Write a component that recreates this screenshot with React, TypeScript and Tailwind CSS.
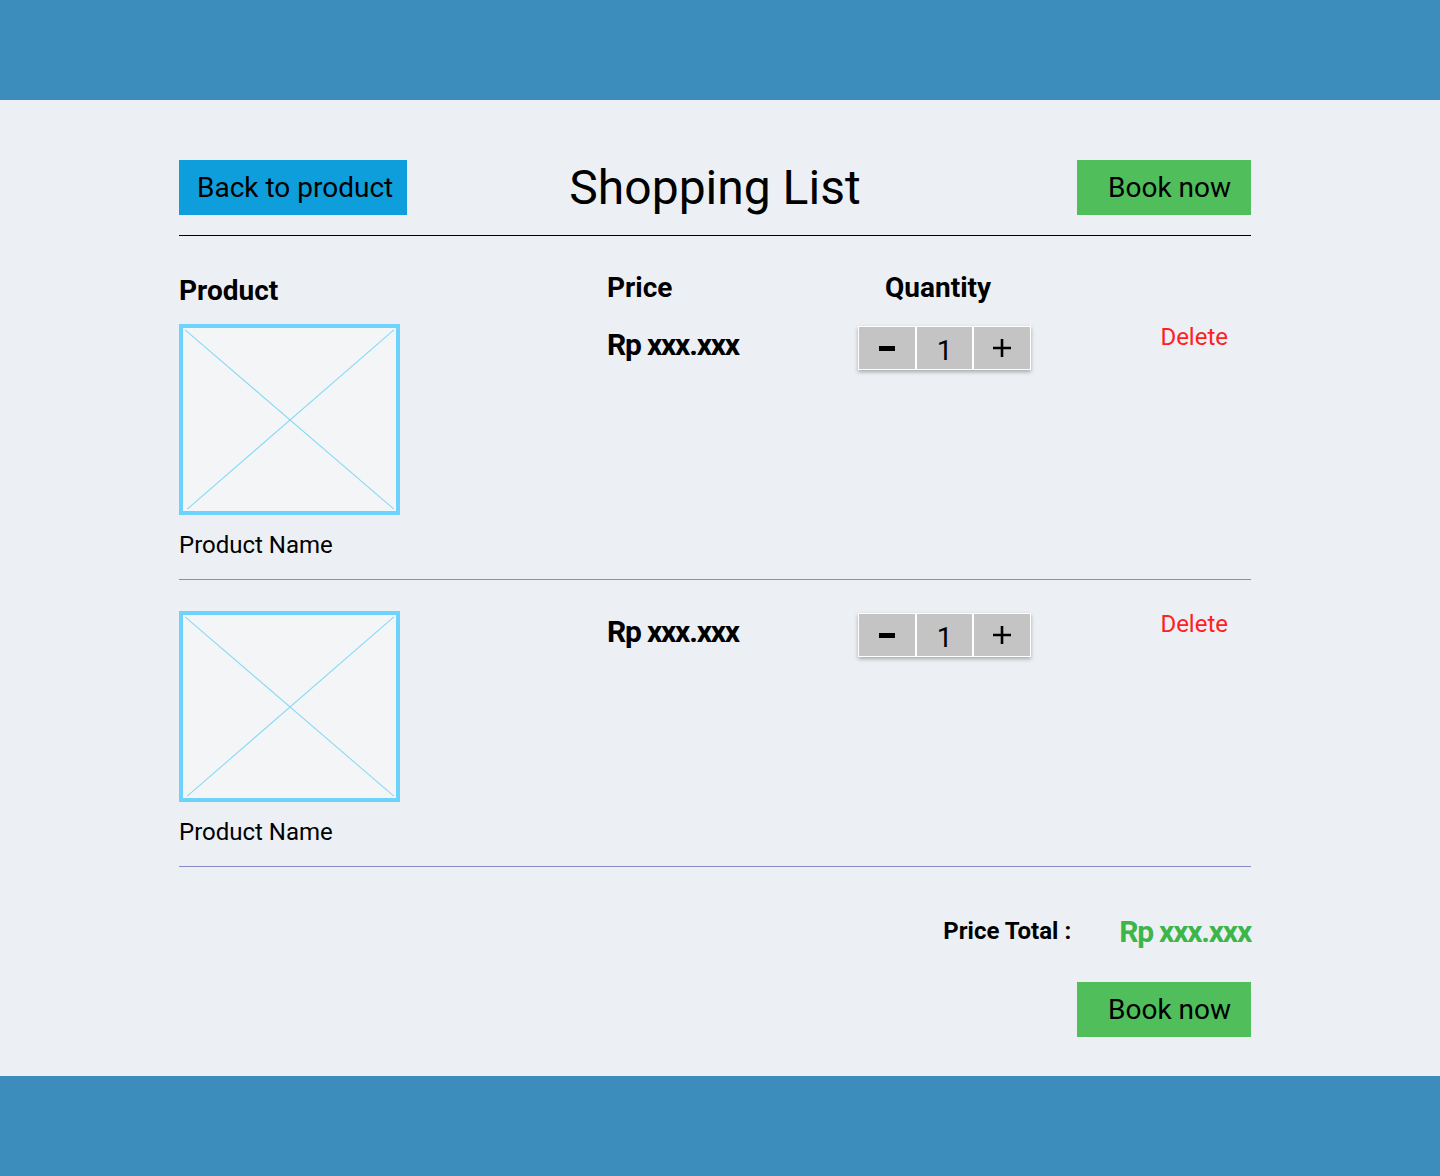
const items = [{ id: 1 }, { id: 2 }];

function ImagePlaceholder() {
  return (
    <div className="w-[221px] h-[191px] border-4 border-[#6dd3fc] bg-[#f3f5f7]">
      <svg className="w-full h-full" viewBox="0 0 100 100" preserveAspectRatio="none">
        <line x1="1" y1="1" x2="99" y2="99" stroke="#84d8f8" strokeWidth="1" vectorEffect="non-scaling-stroke" />
        <line x1="99" y1="1" x2="2" y2="99" stroke="#84d8f8" strokeWidth="1" vectorEffect="non-scaling-stroke" />
      </svg>
    </div>
  );
}

function QtyControl() {
  return (
    <div className="flex w-[173px] h-[44px] bg-white p-[1px] gap-[2px] shadow-[0_2px_4px_rgba(0,0,0,0.3)]">
      <button className="flex-1 bg-[#c4c4c4] flex items-center justify-center">
        <span className="block w-[16px] h-[5px] bg-black" />
      </button>
      <div className="flex-1 bg-[#c4c4c4] flex items-center justify-center pt-[5px] text-[28px] leading-8">1</div>
      <button className="flex-1 bg-[#c4c4c4] flex items-center justify-center">
        <svg width="20" height="20" viewBox="0 0 20 20">
          <path d="M10 1v18M1 10h18" stroke="black" strokeWidth="2.6" />
        </svg>
      </button>
    </div>
  );
}

export default function App() {
  return (
    <div className="w-[1440px] min-h-[1176px] flex flex-col bg-[#ecf0f5] text-black font-['Roboto',sans-serif]">
      <div className="h-[100px] bg-[#3c8dbc]" />

      <main className="h-[976px] pt-[60px]">
        <div className="w-[1072px] ml-[179px]">
          <div className="grid grid-cols-[1fr_auto_1fr] items-center h-[55px]">
            <div>
              <button className="h-[55px] w-[228px] bg-[#0e9edb] text-[28px] pl-[18px] text-left">Back to product</button>
            </div>
            <h1 className="text-[48px] leading-none">Shopping List</h1>
            <div className="flex justify-end">
              <button className="h-[55px] w-[174px] bg-[#4fbe5b] text-[28px] pl-[31px] text-left">Book now</button>
            </div>
          </div>
          <div className="mt-5 h-px bg-black" />

          <div className="mt-9 flex items-start font-bold text-[28px] leading-8">
            <div className="w-[428px] mt-[3px]">Product</div>
            <div className="w-[278px]">Price</div>
            <div>Quantity</div>
          </div>

          {items.map((item, i) => (
            <div key={item.id}>
              <div className={`flex items-start pb-5 ${i === 0 ? 'pt-[17px]' : 'pt-[31px]'}`}>
                <div className="w-[428px]">
                  <ImagePlaceholder />
                  <div className="mt-4 text-[24px] leading-7">Product Name</div>
                </div>
                <div className="w-[251px] mt-[5px] text-[30px] leading-8 font-bold tracking-[-1.2px]">Rp xxx.xxx</div>
                <div className="mt-[2px]">
                  <QtyControl />
                </div>
                <div className="ml-auto mr-[23px] -mt-px text-[24px] leading-7 text-[#ff2020]">Delete</div>
              </div>
              <div className="h-px bg-[#8a8ac8]" />
            </div>
          ))}

          <div className="mt-[46px] h-9 flex items-center justify-end gap-12">
            <span className="text-[24px] font-bold">Price Total :</span>
            <span className="text-[30px] font-bold tracking-[-1.2px] text-[#3cb54a]">Rp xxx.xxx</span>
          </div>

          <div className="mt-[33px] flex justify-end">
            <button className="h-[55px] w-[174px] bg-[#4fbe5b] text-[28px] pl-[31px] text-left">Book now</button>
          </div>
        </div>
      </main>

      <div className="h-[100px] bg-[#3c8dbc]" />
    </div>
  );
}
